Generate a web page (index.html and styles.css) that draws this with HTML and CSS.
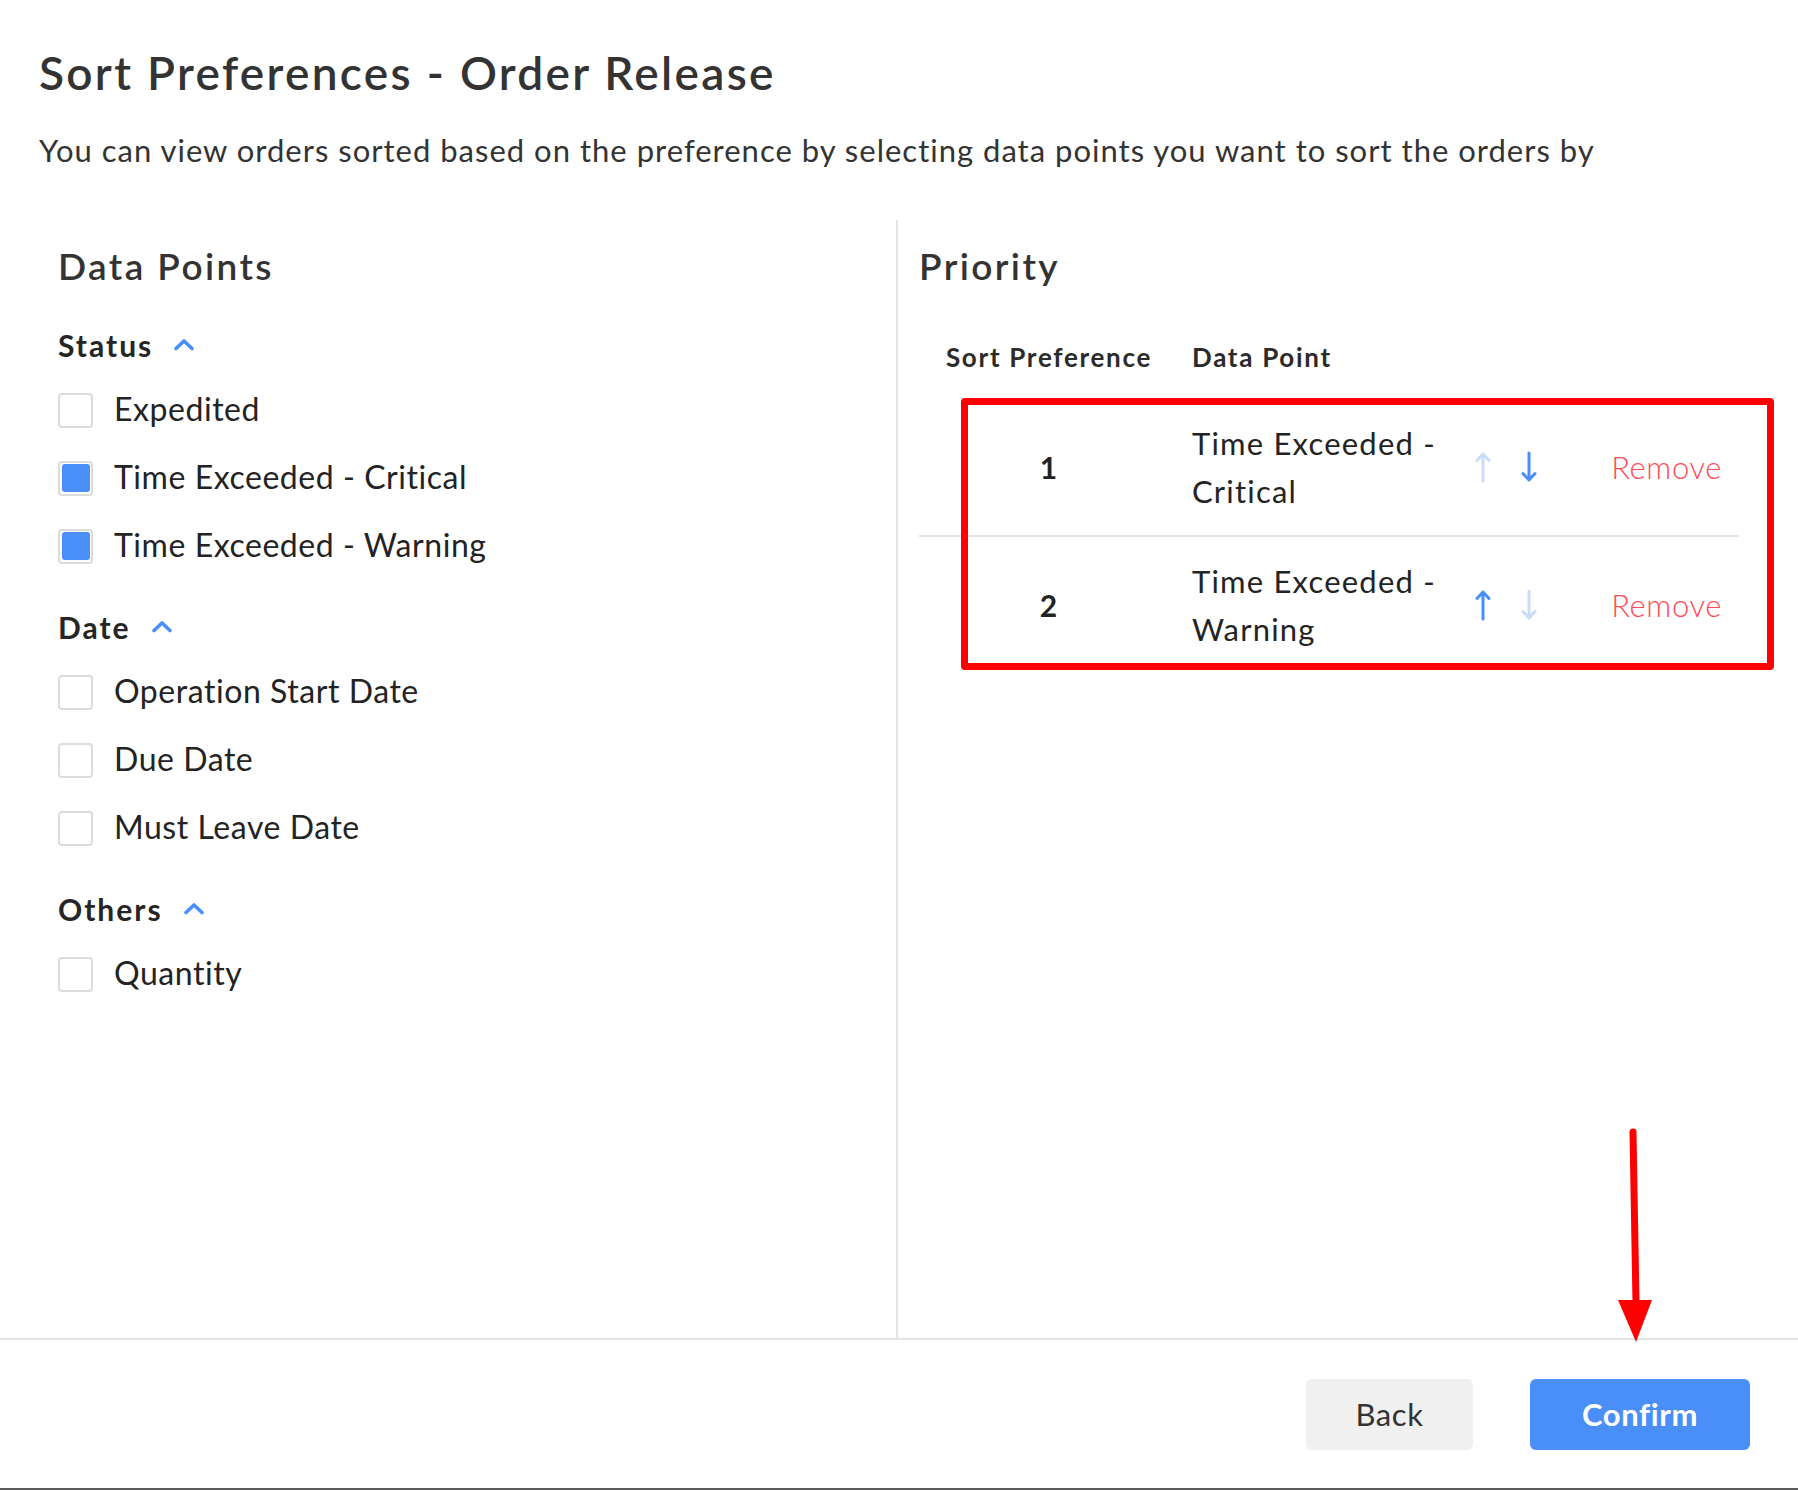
FILE: index.html
```html
<!DOCTYPE html>
<html lang="en">
<head>
<meta charset="utf-8">
<title>Sort Preferences - Order Release</title>
<link rel="stylesheet" href="styles.css">
</head>
<body>
<div class="modal">
  <header class="head">
    <h1 class="title">Sort Preferences - Order Release</h1>
    <p class="subtitle">You can view orders sorted based on the preference by selecting data points you want to sort the orders by</p>
  </header>

  <main class="body">
    <section class="col col-left">
      <h2 class="col-title">Data Points</h2>

      <div class="group">
        <div class="group-head">
          <span>Status</span>
          <svg class="chev" width="22" height="13" viewBox="0 0 22 13"><path d="M3 10.5 L11 3 L19 10.5" fill="none" stroke="#4a8ef7" stroke-width="3.6" stroke-linecap="round" stroke-linejoin="round"/></svg>
        </div>
        <ul class="items">
          <li class="item"><span class="cb"></span><span class="label">Expedited</span></li>
          <li class="item"><span class="cb checked"><span class="cb-fill"></span></span><span class="label">Time Exceeded - Critical</span></li>
          <li class="item"><span class="cb checked"><span class="cb-fill"></span></span><span class="label">Time Exceeded - Warning</span></li>
        </ul>
      </div>

      <div class="group">
        <div class="group-head">
          <span>Date</span>
          <svg class="chev" width="22" height="13" viewBox="0 0 22 13"><path d="M3 10.5 L11 3 L19 10.5" fill="none" stroke="#4a8ef7" stroke-width="3.6" stroke-linecap="round" stroke-linejoin="round"/></svg>
        </div>
        <ul class="items">
          <li class="item"><span class="cb"></span><span class="label">Operation Start Date</span></li>
          <li class="item"><span class="cb"></span><span class="label">Due Date</span></li>
          <li class="item"><span class="cb"></span><span class="label">Must Leave Date</span></li>
        </ul>
      </div>

      <div class="group">
        <div class="group-head">
          <span>Others</span>
          <svg class="chev" width="22" height="13" viewBox="0 0 22 13"><path d="M3 10.5 L11 3 L19 10.5" fill="none" stroke="#4a8ef7" stroke-width="3.6" stroke-linecap="round" stroke-linejoin="round"/></svg>
        </div>
        <ul class="items">
          <li class="item"><span class="cb"></span><span class="label">Quantity</span></li>
        </ul>
      </div>
    </section>

    <section class="col col-right">
      <h2 class="col-title">Priority</h2>
      <div class="table">
        <div class="thead">
          <div class="c-num">Sort Preference</div>
          <div class="c-name">Data Point</div>
        </div>
        <div class="row">
          <div class="c-num num">1</div>
          <div class="c-name">Time Exceeded - Critical</div>
          <div class="c-arrows">
            <svg class="arrow" width="16" height="32" viewBox="0 0 16 32"><path d="M8 30 V3 M2 9.5 L8 3 L14 9.5" fill="none" stroke="#c9ddfb" stroke-width="3" stroke-linecap="round" stroke-linejoin="round"/></svg>
            <svg class="arrow" width="16" height="32" viewBox="0 0 16 32"><path d="M8 2 V29 M2 22.5 L8 29 L14 22.5" fill="none" stroke="#4a8ef7" stroke-width="3" stroke-linecap="round" stroke-linejoin="round"/></svg>
          </div>
          <div class="remove">Remove</div>
        </div>
        <div class="row">
          <div class="c-num num">2</div>
          <div class="c-name">Time Exceeded - Warning</div>
          <div class="c-arrows">
            <svg class="arrow" width="16" height="32" viewBox="0 0 16 32"><path d="M8 30 V3 M2 9.5 L8 3 L14 9.5" fill="none" stroke="#4a8ef7" stroke-width="3" stroke-linecap="round" stroke-linejoin="round"/></svg>
            <svg class="arrow" width="16" height="32" viewBox="0 0 16 32"><path d="M8 2 V29 M2 22.5 L8 29 L14 22.5" fill="none" stroke="#c9ddfb" stroke-width="3" stroke-linecap="round" stroke-linejoin="round"/></svg>
          </div>
          <div class="remove">Remove</div>
        </div>
      </div>
    </section>
  </main>

  <footer class="foot">
    <button class="btn btn-back" type="button">Back</button>
    <button class="btn btn-confirm" type="button">Confirm</button>
  </footer>
</div>
<div class="under"></div>

<div class="mark-box"></div>
<svg class="mark-arrow" width="60" height="230" viewBox="0 0 60 230">
  <path d="M25 4 L28 175" fill="none" stroke="#ff0000" stroke-width="7" stroke-linecap="round"/>
  <polygon points="10,172 44,172 28,214" fill="#ff0000"/>
</svg>
</body>
</html>
```

FILE: styles.css
```css
* { box-sizing: border-box; }

html, body {
  margin: 0;
  padding: 0;
}

body {
  width: 1798px;
  height: 1490px;
  overflow: hidden;
  background: #ffffff;
  font-family: Lato, "Noto Sans", "Liberation Sans", sans-serif;
  color: #2b2b2b;
  position: relative;
}

.modal {
  height: 1488px;
  display: flex;
  flex-direction: column;
  background: #ffffff;
}

.head {
  padding: 46px 40px 0 39px;
}

.title {
  margin: 0;
  font-size: 46px;
  line-height: 53px;
  font-weight: 600;
  color: #333333;
  letter-spacing: 2.3px;
}

.subtitle {
  margin: 33px 0 0;
  font-size: 31px;
  line-height: 37px;
  font-weight: 400;
  color: #333333;
  letter-spacing: 1px;
}

.body {
  flex: 1;
  margin-top: 51px;
  display: flex;
  min-height: 0;
}

.col {
  padding-top: 24px;
}

.col-left {
  width: 898px;
  padding-left: 58px;
  border-right: 2px solid #e4e4e8;
}

.col-right {
  flex: 1;
  padding-left: 21px;
}

.col-title {
  margin: 0;
  font-size: 37px;
  line-height: 43px;
  font-weight: 600;
  color: #333333;
  letter-spacing: 2.4px;
}

.group {
  margin-top: 40px;
}

.group + .group {
  margin-top: 29px;
}

.group-head {
  display: flex;
  align-items: center;
  gap: 20px;
  height: 36px;
  font-size: 30px;
  font-weight: 700;
  color: #252525;
  letter-spacing: 2px;
}

.chev {
  display: block;
  margin-top: -2px;
}

.items {
  list-style: none;
  margin: 13px 0 0;
  padding: 0;
}

.item {
  height: 68px;
  display: flex;
  align-items: center;
  gap: 21px;
}

.cb {
  width: 35px;
  height: 35px;
  border: 2px solid #dcdcdc;
  border-radius: 4px;
  padding: 1.5px;
  background: #ffffff;
  flex: none;
}

.cb-fill {
  display: block;
  width: 100%;
  height: 100%;
  border-radius: 3px;
  background: #4a8ef7;
}

.label {
  font-size: 32px;
  line-height: 40px;
  color: #232323;
  letter-spacing: 0.55px;
  margin-top: -2px;
}

.table {
  margin-top: 55px;
  width: 820px;
}

.thead {
  display: flex;
  align-items: center;
  height: 31px;
  margin-bottom: 26px;
  font-size: 26px;
  line-height: 31px;
  font-weight: 700;
  color: #2b2b2b;
  letter-spacing: 1.7px;
}

.c-num {
  width: 260px;
  padding: 0 20px;
  text-align: center;
  flex: none;
}

.c-name {
  width: 285px;
  padding-left: 13px;
  flex: none;
}

.row {
  display: flex;
  align-items: center;
  padding: 20px 0;
  font-size: 31px;
  line-height: 48px;
  color: #232323;
  letter-spacing: 1.2px;
}

.row + .row {
  border-top: 2px solid #e4e4e8;
}

.num {
  font-weight: 700;
  font-size: 30px;
}

.c-arrows {
  display: flex;
  gap: 30px;
  margin-left: 11px;
}

.arrow {
  display: block;
}

.remove {
  margin-left: auto;
  padding-right: 17px;
  font-size: 31px;
  font-weight: 300;
  color: #ff4b55;
  letter-spacing: 0.6px;
}

.foot {
  height: 150px;
  border-top: 2px solid #e4e4e8;
  display: flex;
  align-items: center;
  justify-content: flex-end;
  gap: 57px;
  padding: 0 48px 0 0;
}

.btn {
  height: 71px;
  border: none;
  border-radius: 6px;
  font-family: Lato, "Noto Sans", "Liberation Sans", sans-serif;
  font-size: 31px;
  letter-spacing: 0.6px;
  cursor: pointer;
}

.btn-back {
  width: 167px;
  background: #f0f0f0;
  color: #333333;
}

.btn-confirm {
  width: 220px;
  background: #4a8ef7;
  color: #ffffff;
  font-weight: 700;
}

.under {
  height: 2px;
  background: #5b5b5b;
}

.mark-box {
  position: absolute;
  left: 961px;
  top: 398px;
  width: 813px;
  height: 272px;
  border: 7px solid #ff0000;
  border-radius: 4px;
}

.mark-arrow {
  position: absolute;
  left: 1608px;
  top: 1128px;
}
```
